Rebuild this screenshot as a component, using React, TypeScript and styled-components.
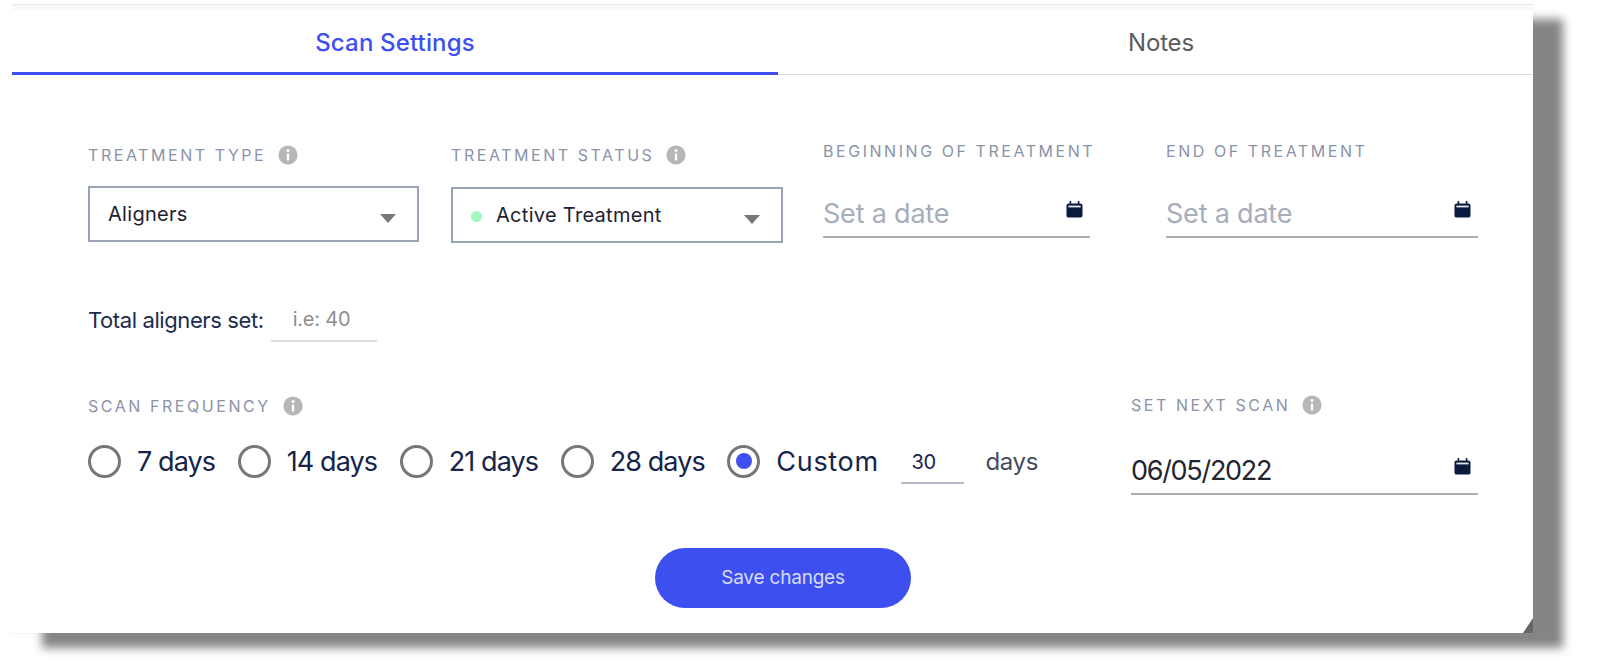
import styled, { createGlobalStyle } from 'styled-components';

const GlobalStyle = createGlobalStyle`
  html, body {
    height: 100%;
    margin: 0;
    background: #fff;
  }

  body {
    overflow: hidden;
    font-family: Inter, "Liberation Sans", sans-serif;
  }

  #root {
    height: 661px;
    padding-top: 4px;
    box-sizing: border-box;
  }
`;

const frequencies = ['7 days', '14 days', '21 days', '28 days'];

function InfoIcon() {
  return (
    <InfoSvg viewBox="0 0 20 20">
      <circle cx="10" cy="10" r="9.6" fill="#b6b6b6" />
      <circle cx="10" cy="5.6" r="1.5" fill="#fff" />
      <rect x="8.8" y="8.4" width="2.4" height="7" rx="0.6" fill="#fff" />
    </InfoSvg>
  );
}

function CalendarIcon() {
  return (
    <CalendarSvg viewBox="0 0 17 17">
      <rect x="3.6" y="0" width="1.6" height="4" fill="#0a1a3f" />
      <rect x="11.8" y="0" width="1.6" height="4" fill="#0a1a3f" />
      <rect x="0.5" y="2.4" width="16" height="14.2" rx="2.2" fill="#0a1a3f" />
      <rect x="2.4" y="4.6" width="12.2" height="1.8" fill="#e4e6ec" />
    </CalendarSvg>
  );
}

export default function App() {
  return (
    <>
      <GlobalStyle />
      <Card>
        <TopStrip />
        <Tabs>
          <Tab $active $width={766}>
            Scan Settings
          </Tab>
          <Tab $width={755} $shift={11}>
            Notes
          </Tab>
        </Tabs>

        <Form>
          <TreatmentRow>
            <Field $width={331} $top={4}>
              <Label>
                TREATMENT TYPE <InfoIcon />
              </Label>
              <Select>
                <SelectValue>Aligners</SelectValue>
                <Caret />
              </Select>
            </Field>

            <Field $width={332} $top={4}>
              <Label>
                TREATMENT STATUS <InfoIcon />
              </Label>
              <Select $offset={1}>
                <StatusDot />
                <SelectValue>Active Treatment</SelectValue>
                <Caret />
              </Select>
            </Field>

            <Field $width={267}>
              <Label>BEGINNING OF TREATMENT</Label>
              <DateInput>
                <Placeholder>Set a date</Placeholder>
                <CalendarIcon />
              </DateInput>
            </Field>

            <Field $width={312}>
              <Label>END OF TREATMENT</Label>
              <DateInput>
                <Placeholder>Set a date</Placeholder>
                <CalendarIcon />
              </DateInput>
            </Field>
          </TreatmentRow>

          <TotalRow>
            <TotalLabel>Total aligners set:</TotalLabel>
            <TotalInput>i.e: 40</TotalInput>
          </TotalRow>

          <ScanRow>
            <Field $top={2}>
              <Label>
                SCAN FREQUENCY <InfoIcon />
              </Label>
              <RadioGroup>
                {frequencies.map((frequency) => (
                  <RadioOption key={frequency}>
                    <Radio />
                    {frequency}
                  </RadioOption>
                ))}
                <RadioOption $wide>
                  <Radio $checked />
                  Custom
                </RadioOption>
                <CustomDays>30</CustomDays>
                <DaysUnit>days</DaysUnit>
              </RadioGroup>
            </Field>

            <Field $width={347} $top={1}>
              <Label>
                SET NEXT SCAN <InfoIcon />
              </Label>
              <NextScanInput>
                <DateValue>06/05/2022</DateValue>
                <CalendarIcon />
              </NextScanInput>
            </Field>
          </ScanRow>

          <SaveButton>Save changes</SaveButton>
        </Form>
        <Notch />
      </Card>
    </>
  );
}

const Card = styled.div`
  position: relative;
  box-sizing: border-box;
  width: 1521px;
  height: 629px;
  margin-left: 12px;
  background: #fff;
  box-shadow:
    30px 15px 9px #858585,
    0 1px 0 #f3f3f3;
`;

const TopStrip = styled.div`
  height: 5px;
  border-top: 1px solid #e8e8e8;
  background: #f9f9f9;
`;

const Tabs = styled.div`
  display: flex;
`;

const Tab = styled.div<{ $active?: boolean; $width: number; $shift?: number }>`
  box-sizing: border-box;
  width: ${(p) => p.$width}px;
  height: 65px;
  padding: 17px 0 0 ${(p) => p.$shift ?? 0}px;
  text-align: center;
  font-size: 24px;
  line-height: 32px;
  font-weight: ${(p) => (p.$active ? 500 : 400)};
  letter-spacing: ${(p) => (p.$active ? 0.15 : -0.2)}px;
  color: ${(p) => (p.$active ? '#3d50ef' : '#5c5c5c')};
  border-bottom: ${(p) => (p.$active ? '3px solid #3d50ef' : '1px solid #dcdcdc')};
`;

const Form = styled.div`
  display: flex;
  flex-direction: column;
  padding: 0 55px 0 76px;
`;

const TreatmentRow = styled.div`
  display: flex;
  gap: 32px;
  margin-top: 66px;

  & > :nth-child(3) {
    margin-left: 8px;
  }

  & > :nth-child(4) {
    margin-left: 44px;
  }
`;

const Field = styled.div<{ $width?: number; $top?: number }>`
  display: flex;
  flex-direction: column;
  width: ${(p) => (p.$width ? `${p.$width}px` : 'auto')};
  padding-top: ${(p) => p.$top ?? 0}px;
`;

const Label = styled.div`
  display: flex;
  align-items: center;
  gap: 12px;
  height: 20px;
  font-size: 16px;
  letter-spacing: 2.55px;
  color: #8b93a8;
  white-space: nowrap;
`;

const InfoSvg = styled.svg`
  width: 20px;
  height: 20px;
  flex-shrink: 0;
`;

const Select = styled.div<{ $offset?: number }>`
  box-sizing: border-box;
  display: flex;
  align-items: center;
  height: 56px;
  margin-top: ${(p) => 21 + (p.$offset ?? 0)}px;
  padding: 0 21px 0 18px;
  border: 2px solid #9aa3b6;
`;

const SelectValue = styled.div`
  flex: 1;
  font-size: 20px;
  letter-spacing: 0.3px;
  color: #1d2230;
`;

const Caret = styled.div`
  width: 0;
  height: 0;
  margin-top: 8px;
  border-left: 8px solid transparent;
  border-right: 8px solid transparent;
  border-top: 9px solid #777;
`;

const StatusDot = styled.div`
  width: 11px;
  height: 11px;
  margin: 2px 14px 0 0;
  border-radius: 50%;
  background: #a3f7c0;
`;

const DateInput = styled.div`
  box-sizing: border-box;
  display: flex;
  align-items: center;
  justify-content: space-between;
  height: 58px;
  margin-top: 19px;
  padding: 0 7px 0 0;
  border-bottom: 2px solid #aaadb4;

  & > svg {
    margin-top: 3px;
  }
`;

const Placeholder = styled.div`
  margin-top: 10px;
  font-size: 27px;
  letter-spacing: -0.2px;
  color: #a6adbb;
`;

const CalendarSvg = styled.svg`
  width: 17px;
  height: 17px;
`;

const TotalRow = styled.div`
  display: flex;
  align-items: flex-start;
  gap: 7px;
  margin-top: 59px;
`;

const TotalLabel = styled.div`
  margin-top: 3px;
  font-size: 22px;
  line-height: 30px;
  letter-spacing: -0.4px;
  color: #1d2c4e;
`;

const TotalInput = styled.div`
  box-sizing: border-box;
  width: 106px;
  height: 40px;
  padding-left: 22px;
  font-size: 20px;
  line-height: 34px;
  letter-spacing: -0.2px;
  color: #8e8e8e;
  border-bottom: 2px solid #dedede;
`;

const ScanRow = styled.div`
  display: flex;
  justify-content: space-between;
  margin-top: 52px;
`;

const RadioGroup = styled.div`
  display: flex;
  align-items: center;
  height: 34px;
  margin-top: 28px;
`;

const RadioOption = styled.div<{ $wide?: boolean }>`
  display: flex;
  align-items: center;
  gap: 16px;
  margin-right: 22.5px;
  font-size: 27px;
  letter-spacing: ${(p) => (p.$wide ? 0.7 : -0.9)}px;
  color: #16244a;
`;

const Radio = styled.div<{ $checked?: boolean }>`
  box-sizing: border-box;
  display: flex;
  align-items: center;
  justify-content: center;
  width: 33px;
  height: 33px;
  border: 3px solid #777;
  border-radius: 50%;

  &::after {
    content: '';
    display: ${(p) => (p.$checked ? 'block' : 'none')};
    width: 16px;
    height: 16px;
    border-radius: 50%;
    background: #3d50ef;
  }
`;

const CustomDays = styled.div`
  box-sizing: border-box;
  width: 63px;
  height: 40px;
  margin: 6px 21px 0 0;
  padding-left: 10px;
  font-size: 20px;
  line-height: 36px;
  letter-spacing: -0.3px;
  color: #16244a;
  border-bottom: 2px solid #b4bac8;
`;

const DaysUnit = styled.div`
  font-size: 24px;
  letter-spacing: -0.3px;
  color: #434c60;
`;

const NextScanInput = styled(DateInput)`
  height: 52px;
  margin-top: 28px;

  & > svg {
    margin-top: -3px;
  }
`;

const DateValue = styled.div`
  margin-top: 5px;
  font-size: 27px;
  letter-spacing: -1.3px;
  color: #22252e;
`;

const SaveButton = styled.div`
  align-self: center;
  box-sizing: border-box;
  width: 256px;
  height: 60px;
  margin-top: 53px;
  font-size: 19px;
  line-height: 60px;
  text-align: center;
  letter-spacing: -0.2px;
  color: #d8dcfb;
  background: #3d50ef;
  border-radius: 30px;
`;

const Notch = styled.div`
  position: absolute;
  right: 0;
  bottom: 0;
  width: 10px;
  height: 15px;
  background: #666;
  clip-path: polygon(100% 0, 100% 100%, 0 100%);
`;
